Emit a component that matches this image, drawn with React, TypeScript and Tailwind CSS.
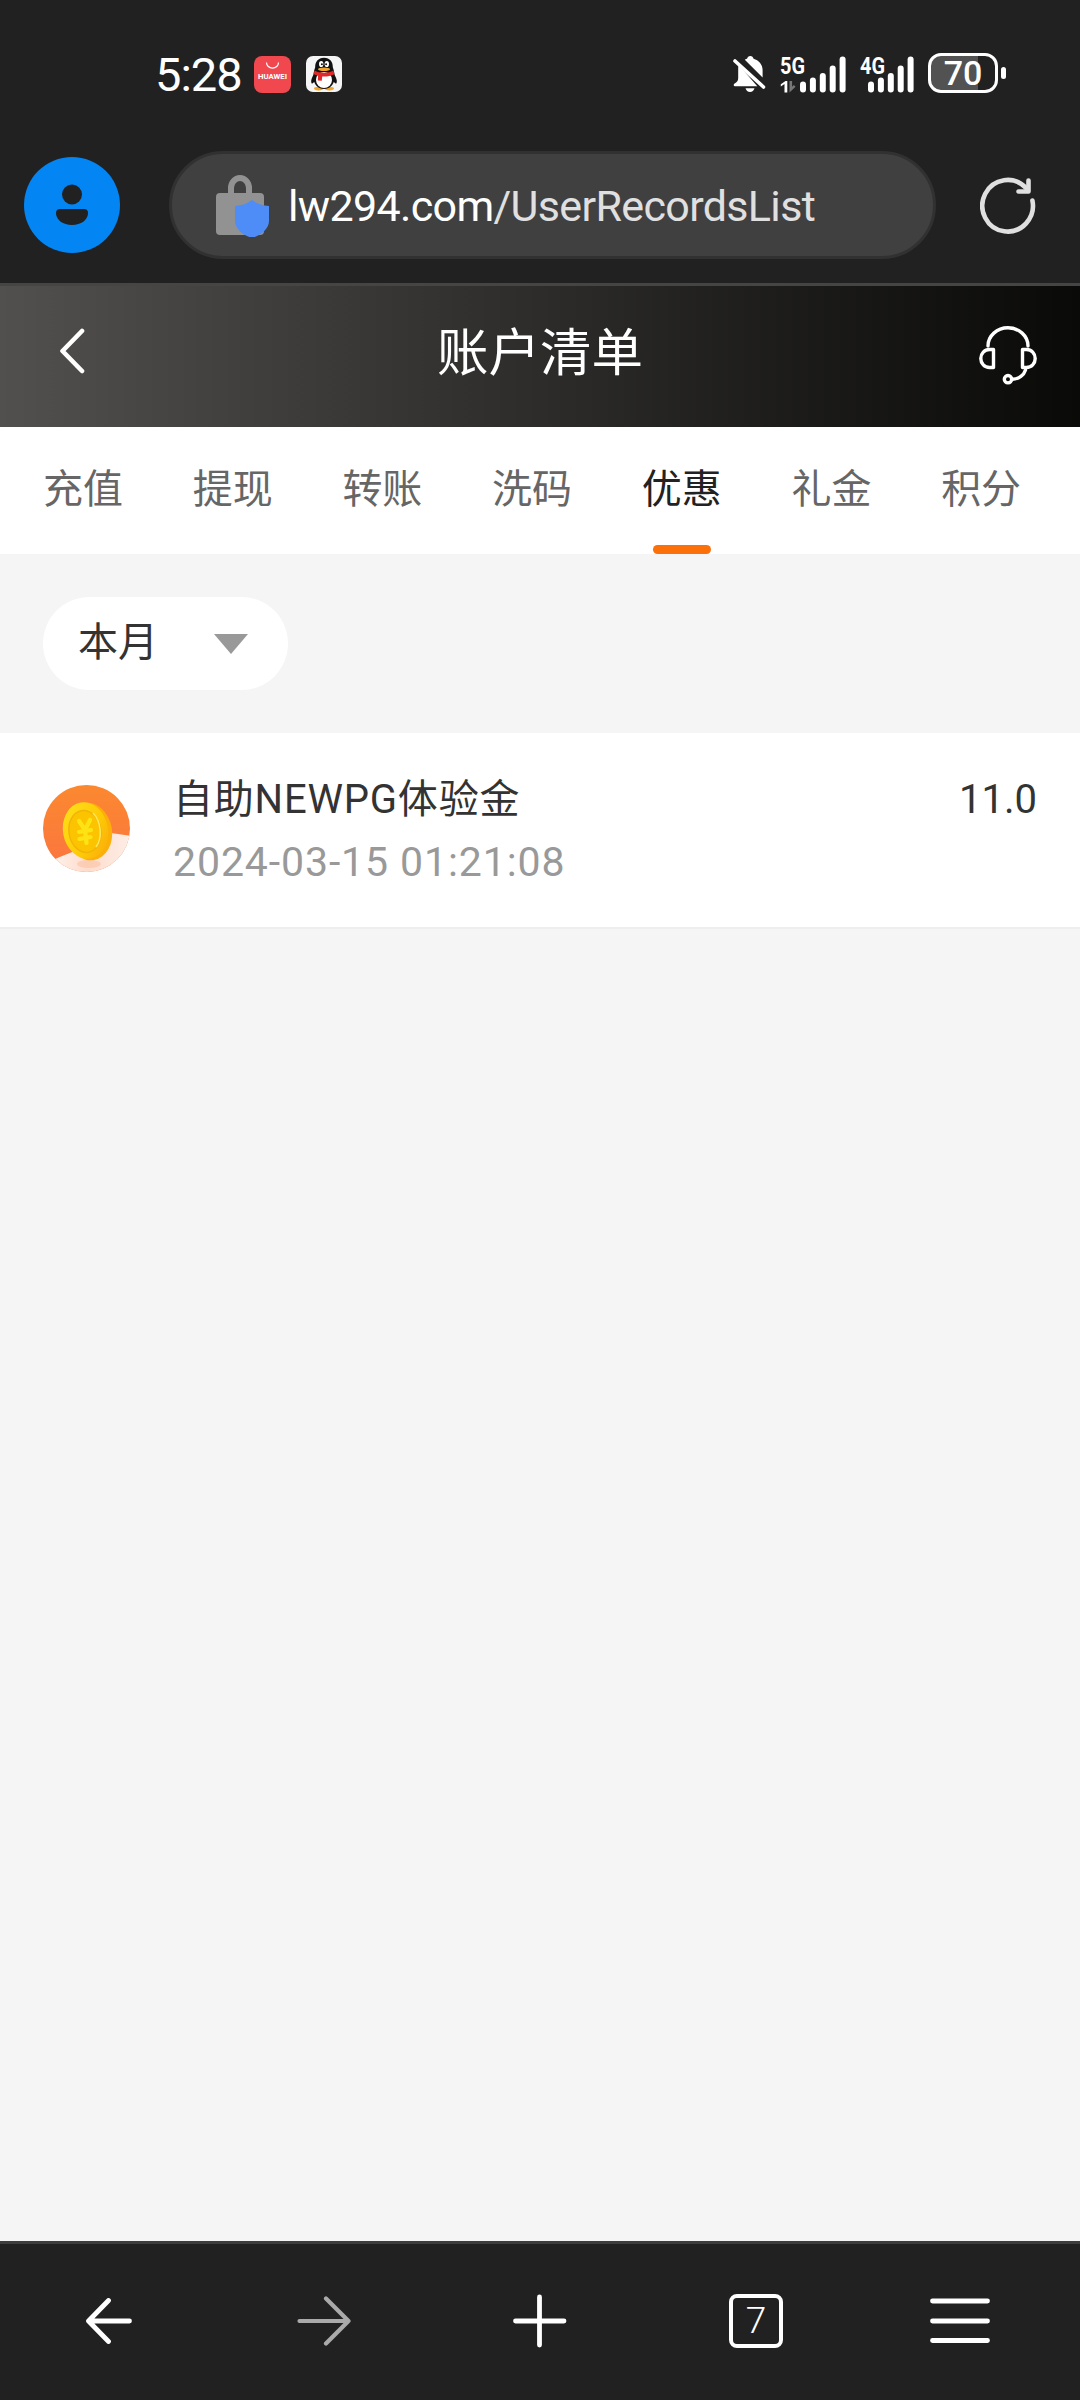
import React, { useState } from 'react';
import clsx from 'clsx';

interface RecordItem {
    id: number;
    title: string;
    time: string;
    amount: string;
}

const TABS = ['充值', '提现', '转账', '洗码', '优惠', '礼金', '积分'];

const RECORDS: RecordItem[] = [
    { id: 1, title: '自助NEWPG体验金', time: '2024-03-15 01:21:08', amount: '11.0' },
];

const HuaweiIcon = () => (
    <svg width="37" height="37" viewBox="0 0 37 37">
        <rect width="37" height="37" rx="8" fill="#f1484f" />
        <path d="M12.5 6.5a6 5.6 0 0 0 12 0" fill="none" stroke="#fff" strokeWidth="1.2" />
        <text x="18.5" y="23.2" textAnchor="middle" textLength="29" lengthAdjust="spacingAndGlyphs" fill="#fff" className="font-['Roboto',sans-serif] text-[7px] font-bold">HUAWEI</text>
    </svg>
);

const PenguinIcon = () => (
    <svg width="36" height="36" viewBox="0 0 36 36">
        <rect width="36" height="36" rx="7" fill="#f5f5f5" />
        <ellipse cx="12.6" cy="32.6" rx="4.6" ry="1.8" fill="#f0a52a" />
        <ellipse cx="23.4" cy="32.6" rx="4.6" ry="1.8" fill="#f0a52a" />
        <path d="M8 18c-2 3-3.6 7-2.4 9.2.8.9 2.4-.9 3.4-2.2z" fill="#111" />
        <path d="M28 18c2 3 3.6 7 2.4 9.2-.8.9-2.4-.9-3.4-2.2z" fill="#111" />
        <path d="M18 1.8c-6 0-9 4.4-8.8 9.4C7.6 15 7.2 19 7.6 23c.4 6 5 10 10.4 10s10-4 10.4-10c.4-4 0-8-1.6-11.8C27 6.2 24 1.8 18 1.8z" fill="#111" />
        <ellipse cx="18" cy="24" rx="8" ry="8" fill="#fff" />
        <ellipse cx="15.2" cy="8" rx="2.2" ry="3.1" fill="#fff" />
        <ellipse cx="20.8" cy="8" rx="2.2" ry="3.1" fill="#fff" />
        <circle cx="15.9" cy="8.3" r="1" fill="#111" />
        <circle cx="20.1" cy="8.3" r="1" fill="#111" />
        <ellipse cx="18" cy="13.2" rx="6" ry="1.7" fill="#f0a52a" />
        <path d="M8.6 14.5c5 3 13.8 3 18.8 0l1 3.7c-3.6 1.9-8 2.6-12.2 2.3l-.4 4.3-4-.3.3-5c-1.6-.4-3.2-.9-4.500-1.600z" fill="#e02828" />
    </svg>
);

const MutedBellIcon = () => (
    <svg width="34" height="38" viewBox="0 0 34 38" fill="#fff">
        <path d="M11.8 4.8c.9-.6 1.5-.8 2.2-1C14.5 2.2 15.5 1 17.3 1s2.8 1.2 3.3 2.8c5 1.5 9 5.7 9 11.2v7.5z" />
        <path d="M5.2 13c0-1 .2-2 .5-3l18.6 21.2H2c-1.6 0-1.7-2-.4-2.8C4 27 5.2 26 5.2 23z" />
        <path d="M2 6l28.5 26" stroke="#fff" strokeWidth="3.6" strokeLinecap="round" />
        <path d="M12.5 33.2h9c-.7 2.2-2.2 3.8-4.5 3.8s-3.8-1.6-4.5-3.8z" />
    </svg>
);

interface SignalProps {
    label: string;
    barX: number;
    arrows?: boolean;
}

const BAR_HEIGHTS = [11, 15, 19.5, 27, 36];

const Signal: React.FC<SignalProps> = ({ label, barX, arrows }) => (
    <svg width={barX + 46} height="53" viewBox={`0 -8 ${barX + 46} 53`} fill="#fff">
        <text x="0" y="18" textLength="25" lengthAdjust="spacingAndGlyphs" className="font-['Roboto',sans-serif] text-[24px] font-bold">{label}</text>
        {arrows && (
            <>
                <path d="M4.5 36.5V28L.8 30.6v-2.4L5.5 25h1.8v11.5z" />
                <path d="M9.5 25v11.5l6-5.8-1.6-1.6-1.8 1.6V25z" fill="#777" />
            </>
        )}
        {BAR_HEIGHTS.map((h, i) => (
            <rect key={h} x={barX + i * 9.9} y={36.5 - h} width="6" height={h} rx="3" />
        ))}
    </svg>
);

const StatusBar = () => (
    <div className="flex h-[148px] items-center justify-between pr-[74px] pl-[155px]">
        <div className="flex items-center">
            <span className="w-[99px] text-[47px] leading-none tracking-[-1px] text-white">5:28</span>
            <HuaweiIcon />
            <span className="ml-[15px]">
                <PenguinIcon />
            </span>
        </div>
        <div className="flex items-center">
            <MutedBellIcon />
            <span className="ml-[13px]">
                <Signal label="5G" barX={20} arrows />
            </span>
            <span className="ml-[14px]">
                <Signal label="4G" barX={8} />
            </span>
            <div className="mb-0.5 ml-[14px] flex items-center gap-[3px]">
                <div className="flex h-10 w-[70px] items-center justify-center rounded-[13px] border-[3px] border-white bg-linear-to-r from-[#525252] from-73% to-[#212121] to-73% text-[34px] leading-none font-medium text-white">
                    70
                </div>
                <div className="h-3 w-[5px] rounded-full bg-white" />
            </div>
        </div>
    </div>
);

const LockIcon = () => (
    <svg width="54" height="64" viewBox="0 0 54 64">
        <path d="M15 22v-7a9 10 0 0 1 18 0v7" fill="none" stroke="#929292" strokeWidth="6" />
        <rect x="0" y="20" width="48" height="42" rx="4" fill="#929292" />
        <path d="M36 27c4.5 3.500 10 5.500 17 6v15c0 8-8 14-17 17-9-3-17-9-17-17V33c7-.5 12.5-2.5 17-6z" fill="#4e8cf8" />
    </svg>
);

const AddressBar = () => (
    <div className="flex h-[138px] items-start border-b-[3px] border-[#454545] pt-[3px] pl-6">
        <div className="mt-1.5 flex h-24 w-24 items-center justify-center rounded-full bg-[#0385f3]">
            <svg width="32" height="42" viewBox="0 0 32 42" fill="#212121">
                <circle cx="16" cy="10.5" r="10" />
                <path d="M4 25h24a4 4 0 0 1 4 4c0 7-7 12-16 12S0 36 0 29a4 4 0 0 1 4-4z" />
            </svg>
        </div>
        <div className="ml-[49px] flex h-[108px] w-[767px] items-center rounded-full border-[3px] border-[#313131] bg-[#404040] pl-11">
            <LockIcon />
            <span className="mt-0.5 ml-[18px] text-[43px] leading-none tracking-[-0.65px] whitespace-nowrap text-white">
                lw294.com<span className="text-[#e0e0e0]">/UserRecordsList</span>
            </span>
        </div>
        <svg className="mt-[25px] ml-[44px]" width="56" height="58" viewBox="0 0 56 58" fill="none" stroke="#e0e0e0" strokeWidth="4.6" strokeLinecap="round" strokeLinejoin="round">
            <path d="M52.4 24.5A25.3 25.8 0 1 1 46 12" />
            <path d="M48.5 4.5v11h-10" />
        </svg>
    </div>
);

const PageHeader = () => (
    <div className="flex h-[141px] items-center justify-between bg-linear-to-r from-[#51504e] via-[#2d2c2b] to-[#0a0a08] pr-[43px] pl-[60px]">
        <svg className="mb-[11px]" width="60" height="46" viewBox="0 0 60 46" fill="none" stroke="#fff" strokeWidth="4.6" strokeLinecap="round" strokeLinejoin="round">
            <path d="M22 3L2.5 23 22 43" />
        </svg>
        <h1 className="mr-[19px] mb-1.5 text-[51.5px] leading-none text-white">账户清单</h1>
        <svg className="mb-[3px]" width="58" height="59" viewBox="0 0 58 59" fill="none" stroke="#fff" strokeWidth="3.4" strokeLinecap="round" strokeLinejoin="round">
            <path d="M9 20a20 18.2 0 0 1 40 0" />
            <path d="M14.5 23.5H10.5c-5 0-8.7 4-8.7 9s3.7 9 8.7 9h4z" />
            <path d="M43.5 23.5h4c5 0 8.7 4 8.7 9s-3.7 9-8.7 9h-4z" />
            <path d="M46.5 44c-1.5 5-6.5 9-13 9.2" />
            <circle cx="29" cy="53.2" r="3.7" />
        </svg>
    </div>
);

const CoinIcon = () => (
    <svg width="87" height="87" viewBox="0 0 87 87">
        <defs>
            <clipPath id="coinClip">
                <circle cx="43.5" cy="43.5" r="43.5" />
            </clipPath>
            <linearGradient id="coinBg" x1="0" y1="0" x2="0" y2="1">
                <stop offset="0" stopColor="#fb8930" />
                <stop offset="1" stopColor="#fb7440" />
            </linearGradient>
            <linearGradient id="coinEdge" x1="0" y1="0" x2="1" y2="1">
                <stop offset="0" stopColor="#ffe01c" />
                <stop offset="0.6" stopColor="#fdca05" />
                <stop offset="1" stopColor="#fba60c" />
            </linearGradient>
            <linearGradient id="coinGround" x1="0" y1="0" x2="1" y2="0">
                <stop offset="0" stopColor="#fff3ed" />
                <stop offset="0.45" stopColor="#fddccc" />
                <stop offset="1" stopColor="#fdeee7" />
            </linearGradient>
        </defs>
        <g clipPath="url(#coinClip)">
            <rect width="87" height="87" fill="url(#coinBg)" />
            <path d="M8 76C28 66 48 62 68 48l20 3v37H8z" fill="url(#coinGround)" />
            <ellipse cx="46" cy="79" rx="12" ry="4" fill="#fbb48f" opacity="0.4" />
            <ellipse cx="46" cy="46.5" rx="23" ry="29" transform="rotate(-10 46 46.5)" fill="#fbb008" />
            <ellipse cx="42.500" cy="45.500" rx="22.500" ry="28.500" transform="rotate(-10 42.5 45.5)" fill="url(#coinEdge)" />
            <ellipse cx="42" cy="46.5" rx="16" ry="21" transform="rotate(-10 42 46.5)" fill="#fcc400" stroke="#f2b408" strokeWidth="1.5" />
            <path d="M50 28c8 8 10 25 3 34" fill="none" stroke="#ffe75c" strokeWidth="1.5" />
            <path d="M36 36l6 9 5-10M36 47l12-2M36.500 54l11-2M42 45l1.500 13" fill="none" stroke="#fde314" strokeWidth="4.2" strokeLinecap="round" />
        </g>
    </svg>
);

const BottomNav = () => (
    <div className="flex h-[159px] items-center border-t-[3px] border-[#3d3d3d] bg-[#212121] pb-0.5 pl-[86px]">
        <svg className="mb-px" width="46" height="46" viewBox="0 0 46 46" fill="none" stroke="#fff" strokeWidth="4.8" strokeLinecap="round" strokeLinejoin="round">
            <path d="M22.5 2.5L2.5 23l20 20.5M3 23h40.5" />
        </svg>
        <svg className="ml-[165px]" width="54" height="50" viewBox="0 0 54 50" fill="none" stroke="#aaa" strokeWidth="4.2" strokeLinecap="round" strokeLinejoin="round">
            <path d="M29 2.5L51.5 25 29 47.5M51.5 25h-49" />
        </svg>
        <svg className="mb-px ml-[162px]" width="54" height="54" viewBox="0 0 54 54" fill="none" stroke="#fff" strokeWidth="4.8" strokeLinecap="round">
            <path d="M26.5 3v48M2.5 27h48.5" />
        </svg>
        <div className="ml-[162px] flex h-[54px] w-[54px] items-center justify-center rounded-lg border-[4.5px] border-white pb-0.5 text-[37px] leading-none font-light text-white">
            7
        </div>
        <svg className="ml-[147px]" width="60" height="46" viewBox="0 0 60 46" fill="none" stroke="#fff" strokeWidth="4.8" strokeLinecap="round">
            <path d="M2.5 3h55M2.5 23h55M2.5 42.5h55" />
        </svg>
    </div>
);

const App: React.FC = () => {
    const [activeTab, setActiveTab] = useState('优惠');

    return (
        <div className="flex h-[2400px] w-[1080px] flex-col overflow-hidden bg-[#f5f5f5] font-['Roboto','Noto_Sans_CJK_SC',sans-serif]">
            <header className="bg-[#212121]">
                <StatusBar />
                <AddressBar />
                <PageHeader />
            </header>

            <nav className="flex h-[127px] gap-[69.7px] bg-white pl-[43px]">
                {TABS.map((tab) => (
                    <button
                        key={tab}
                        onClick={() => setActiveTab(tab)}
                        className={clsx(
                            'flex w-20 flex-col items-center justify-between pt-[43px] text-[40px] leading-none',
                            tab === activeTab ? 'text-[#222]' : 'text-[#666]'
                        )}
                    >
                        {tab}
                        {tab === activeTab && <span className="h-[9px] w-[58px] rounded-full bg-[#fb7009]" />}
                    </button>
                ))}
            </nav>

            <main className="flex-1">
                <div className="px-[43px] py-[43px]">
                    <button className="flex h-[93px] w-[245px] items-center justify-between rounded-full bg-white pr-10 pl-[35px] text-[40px] leading-none text-[#333]">
                        <span className="mb-0.5">本月</span>
                        <svg width="34" height="20" viewBox="0 0 34 20" fill="#999">
                            <path d="M0 0h34L17 20z" />
                        </svg>
                    </button>
                </div>

                {RECORDS.map((record) => (
                    <div key={record.id} className="flex h-[196px] items-start border-b-2 border-[#eee] bg-white px-[43px]">
                        <div className="mt-[52px]">
                            <CoinIcon />
                        </div>
                        <div className="mt-[47px] ml-[43px] flex-1">
                            <div className="text-[40px] leading-none tracking-[0.8px] text-[#333]">{record.title}</div>
                            <div className="mt-[22px] text-[41px] leading-none tracking-[0.9px] text-[#999]">{record.time}</div>
                        </div>
                        <div className="mt-[47px] text-[40px] leading-none text-[#333]">{record.amount}</div>
                    </div>
                ))}
            </main>

            <BottomNav />
        </div>
    );
};

export default App;
